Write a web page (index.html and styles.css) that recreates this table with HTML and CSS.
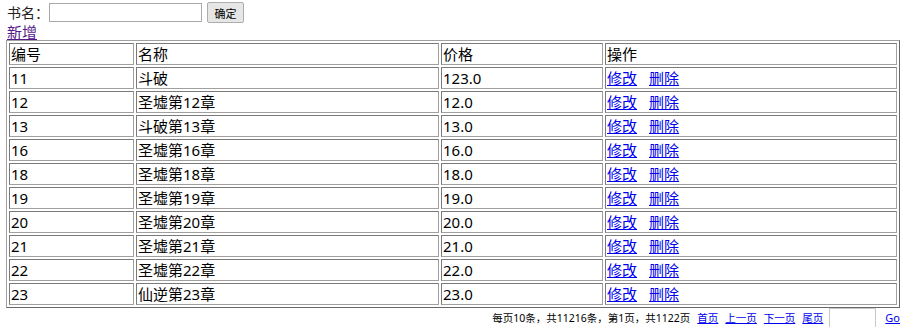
FILE: index.html
```html
<!DOCTYPE html>
<html lang="zh">
<head>
<meta charset="utf-8">
<title>图书列表</title>
<link rel="stylesheet" href="styles.css">
</head>
<body>
<form class="search">
  <span class="search-label">书名：</span>
  <input class="search-input" type="text">
  <button class="search-btn" type="button">确定</button>
</form>
<div class="add-row"><a class="add-link" href="#">新增</a></div>
<table class="books">
  <colgroup>
    <col class="c1"><col class="c2"><col class="c3"><col class="c4">
  </colgroup>
  <tr><td>编号</td><td>名称</td><td>价格</td><td>操作</td></tr>
  <tr><td>11</td><td>斗破</td><td>123.0</td><td><a href="#">修改</a><a class="del" href="#">删除</a></td></tr>
  <tr><td>12</td><td>圣墟第12章</td><td>12.0</td><td><a href="#">修改</a><a class="del" href="#">删除</a></td></tr>
  <tr><td>13</td><td>斗破第13章</td><td>13.0</td><td><a href="#">修改</a><a class="del" href="#">删除</a></td></tr>
  <tr><td>16</td><td>圣墟第16章</td><td>16.0</td><td><a href="#">修改</a><a class="del" href="#">删除</a></td></tr>
  <tr><td>18</td><td>圣墟第18章</td><td>18.0</td><td><a href="#">修改</a><a class="del" href="#">删除</a></td></tr>
  <tr><td>19</td><td>圣墟第19章</td><td>19.0</td><td><a href="#">修改</a><a class="del" href="#">删除</a></td></tr>
  <tr><td>20</td><td>圣墟第20章</td><td>20.0</td><td><a href="#">修改</a><a class="del" href="#">删除</a></td></tr>
  <tr><td>21</td><td>圣墟第21章</td><td>21.0</td><td><a href="#">修改</a><a class="del" href="#">删除</a></td></tr>
  <tr><td>22</td><td>圣墟第22章</td><td>22.0</td><td><a href="#">修改</a><a class="del" href="#">删除</a></td></tr>
  <tr><td>23</td><td>仙逆第23章</td><td>23.0</td><td><a href="#">修改</a><a class="del" href="#">删除</a></td></tr>
</table>
<div class="pager">
  <span class="pager-info">每页10条，共11216条，第1页，共1122页</span>
  <a href="#">首页</a>
  <a href="#">上一页</a>
  <a href="#">下一页</a>
  <a href="#">尾页</a>
  <input class="page-input" type="text">
  <a class="go" href="#">Go</a>
</div>
</body>
</html>
```
FILE: styles.css
```css
html, body {
  margin: 0;
  padding: 0;
  background: #ffffff;
}
body {
  padding: 1px 8px 0 6px;
  font-family: "Noto Sans", "Noto Sans CJK SC", sans-serif;
  font-size: 15px;
  color: #000000;
}
a {
  color: #0000ee;
}
.search {
  display: flex;
  align-items: center;
  height: 23px;
  margin: 0;
}
.search-label {
  flex: none;
  white-space: nowrap;
  padding-left: 1px;
  font-size: 14px;
  line-height: 18px;
  color: #222;
}
.search-input {
  flex: none;
  box-sizing: border-box;
  width: 153px;
  height: 19px;
  margin: 0;
  border: 1px solid #a9a9a9;
  padding: 0 2px;
}
.search-btn {
  flex: none;
  box-sizing: border-box;
  width: 37px;
  height: 21px;
  margin: 0 0 0 5px;
  padding: 0;
  border: 1px solid #adadad;
  border-radius: 2px;
  background: #e6e6e6;
  font-family: "Noto Sans CJK SC", sans-serif;
  font-size: 11px;
  color: #000;
}
.add-row {
  line-height: 16px;
  height: 16px;
  padding-left: 1px;
}
.add-link {
  color: #551a8b;
}
.books {
  table-layout: fixed;
  width: 894px;
  border-collapse: separate;
  border-spacing: 2px;
  border: 1px solid;
  border-color: #a0a0a0 #696969 #696969 #a0a0a0;
}
.c1 { width: 125px; }
.c2 { width: 303px; }
.c3 { width: 162px; }
.c4 { width: 292px; }
.books td {
  border: 1px solid;
  border-color: #7a7a7a #a0a0a0 #a0a0a0 #7a7a7a;
  padding: 1px 1px;
  height: 18px;
  line-height: 18px;
  white-space: nowrap;
  vertical-align: middle;
}
.books .del {
  margin-left: 12px;
}
.pager {
  display: flex;
  justify-content: flex-end;
  align-items: center;
  gap: 7px;
  height: 20px;
  font-size: 10.5px;
  line-height: 14px;
  margin-top: 0;
}
.page-input {
  box-sizing: border-box;
  width: 47px;
  height: 21px;
  margin: 0 0 0 -1px;
  border: 1px solid #c8c8c8;
  padding: 0;
}
.pager .go {
  margin-left: 2px;
  font-family: "Noto Sans", sans-serif;
  font-size: 11px;
}
```
